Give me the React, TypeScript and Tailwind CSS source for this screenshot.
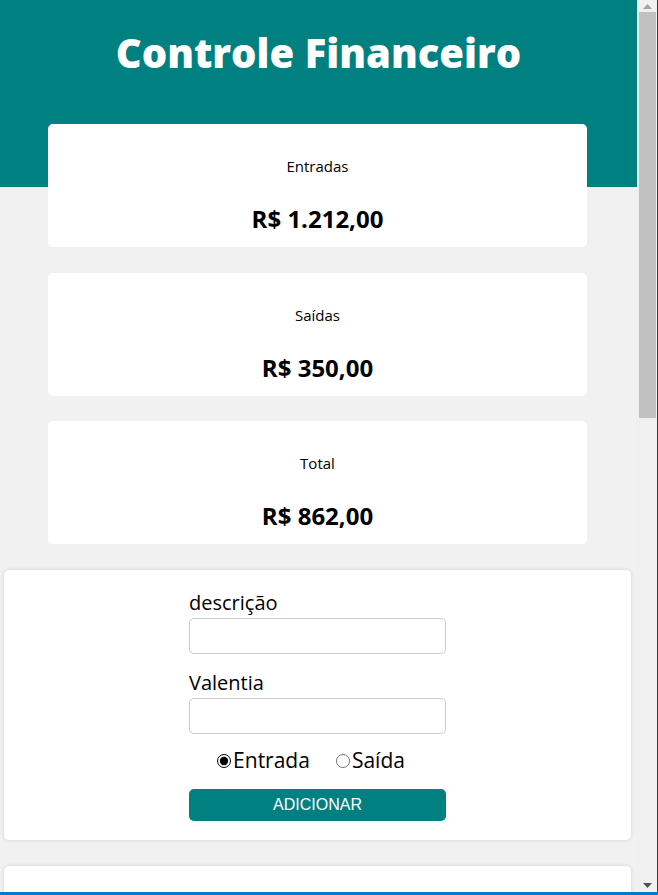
import React, { useState } from 'react'

type Resumo = {
  titulo: string
  valor: string
}

const resumos: Resumo[] = [
  { titulo: 'Entradas', valor: 'R$ 1.212,00' },
  { titulo: 'Saídas', valor: 'R$ 350,00' },
  { titulo: 'Total', valor: 'R$ 862,00' },
]

const ResumoCard = ({ titulo, valor }: Resumo) => (
  <div className="flex h-[123px] w-[539px] flex-col items-center rounded-[5px] bg-white pt-[32px]">
    <span className="text-[15px] leading-[20px] text-black">{titulo}</span>
    <span className="mt-[28px] text-[24px] font-bold leading-[30px] text-black">{valor}</span>
  </div>
)

const Scrollbar = () => (
  <div className="flex h-[892px] w-[21px] shrink-0 flex-col border-r border-[#3c3c3c] bg-[#f0f0f0]">
    <div className="flex h-[12px] items-center justify-center">
      <svg width="9" height="5" viewBox="0 0 9 5">
        <path d="M0 5 L4.5 0 L9 5 Z" fill="#a3a3a3" />
      </svg>
    </div>
    <div className="ml-[2px] h-[406px] w-[17px] bg-[#c1c1c1]" />
    <div className="flex-1" />
    <div className="flex h-[14px] items-center justify-center">
      <svg width="9" height="5" viewBox="0 0 9 5">
        <path d="M0 0 L9 0 L4.5 5 Z" fill="#505050" />
      </svg>
    </div>
  </div>
)

export default function App() {
  const [tipo, setTipo] = useState<'entrada' | 'saida'>('entrada')

  return (
    <div className="h-[895px] w-[658px] overflow-hidden bg-[#f1f1f1] font-['Open_Sans',sans-serif]">
      <div className="flex">
        <div className="h-[892px] w-[637px] overflow-hidden">
          {/* cabeçalho */}
          <header className="flex h-[187px] justify-center bg-[#008080] pt-[26px]">
            <h1 className="text-[40px] font-extrabold leading-[54px] text-white">
              Controle Financeiro
            </h1>
          </header>

          {/* resumo */}
          <div className="-mt-[63px] flex flex-col items-start gap-[25.5px] pl-[48px]">
            {resumos.map((r) => (
              <ResumoCard key={r.titulo} {...r} />
            ))}
          </div>

          {/* formulário */}
          <div className="ml-[4px] mt-[26px] w-[627px] rounded-[5px] bg-white pb-[19px] pt-[18px] shadow-[0_0_4px_rgba(0,0,0,0.12)]">
            <div className="mx-auto flex w-[257px] flex-col">
              <label className="text-[20px] leading-[30px] text-black">descrição</label>
              <input
                type="text"
                className="h-[36px] rounded-[5px] border border-[#cccccc] px-2 outline-none"
              />
              <label className="mt-[14px] text-[20px] leading-[30px] text-black">Valentia</label>
              <input
                type="number"
                className="h-[36px] rounded-[5px] border border-[#cccccc] px-2 outline-none"
              />
              <div className="mt-[15px] flex h-[24px] items-center justify-center gap-[26px] pr-[13px] text-[21px] text-black">
                <label className="flex items-center">
                  <input
                    type="radio"
                    name="tipo"
                    checked={tipo === 'entrada'}
                    onChange={() => setTipo('entrada')}
                    className="m-0 mr-[2px] h-[14px] w-[14px] accent-black"
                  />
                  Entrada
                </label>
                <label className="flex items-center">
                  <input
                    type="radio"
                    name="tipo"
                    checked={tipo === 'saida'}
                    onChange={() => setTipo('saida')}
                    className="m-0 mr-[2px] h-[14px] w-[14px] accent-black"
                  />
                  Saída
                </label>
              </div>
              <button className="mt-[16px] h-[32px] rounded-[5px] bg-[#008080] font-['Liberation_Sans',sans-serif] text-[16px] text-white">
                ADICIONAR
              </button>
            </div>
          </div>

          {/* tabela */}
          <div className="ml-[4px] mt-[26px] h-[80px] w-[627px] rounded-[5px] bg-white shadow-[0_0_4px_rgba(0,0,0,0.12)]" />
        </div>
        <Scrollbar />
      </div>
      <div className="h-[3px] w-full bg-[#007acc]" />
    </div>
  )
}
